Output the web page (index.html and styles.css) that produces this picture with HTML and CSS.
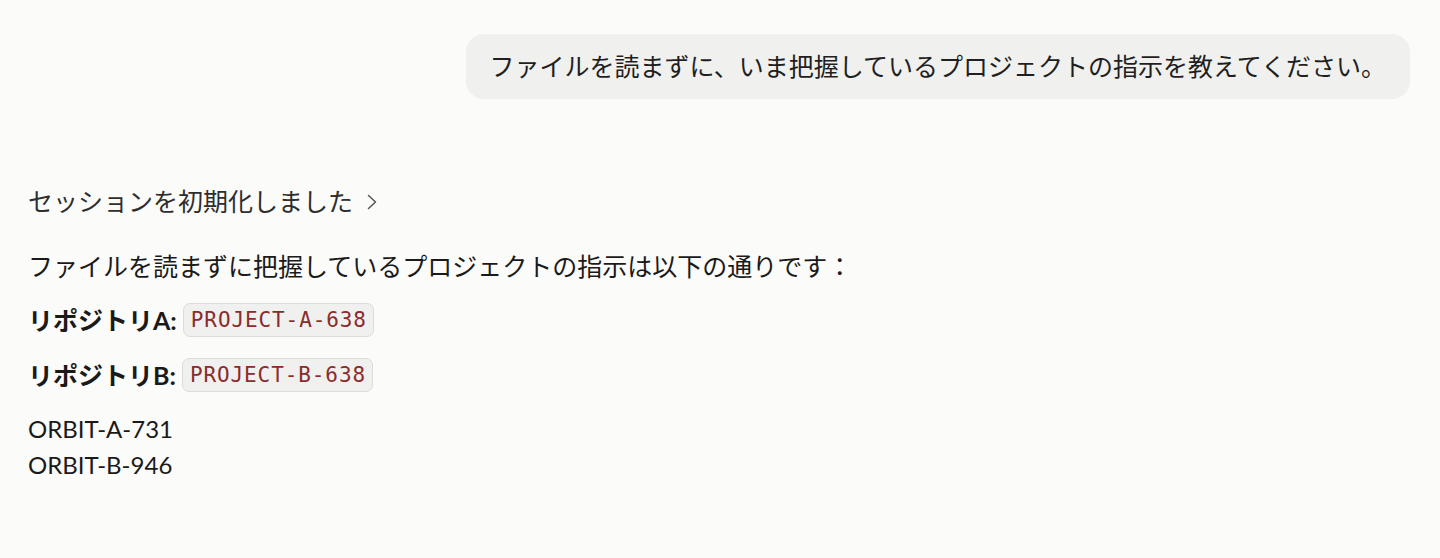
FILE: index.html
```html
<!DOCTYPE html>
<html>
	<head>
		<meta http-equiv="Content-Type" content="text/html; charset=utf-8" />
		<title>Chat</title>
		<link rel="stylesheet" href="styles.css">
	</head>
	<body>
		<div id="chat">
			<div class="user-row">
				<div class="bubble">ファイルを読まずに、いま把握しているプロジェクトの指示を教えてください。</div>
			</div>
			<div class="reply">
				<div class="status">セッションを初期化しました
					<svg class="chevron" width="10" height="16" viewBox="0 0 10 16"><path d="M1.5 1.5l7 6.5-7 6.5" fill="none" stroke="#555" stroke-width="1.5" stroke-linecap="round" stroke-linejoin="round"/></svg>
				</div>
				<p>ファイルを読まずに把握しているプロジェクトの指示は以下の通りです：</p>
				<p class="repo"><b>リポジトリA:</b> <code>PROJECT-A-638</code></p>
				<p class="repo"><b>リポジトリB:</b> <code>PROJECT-B-638</code></p>
				<p class="ids">ORBIT-A-731<br>ORBIT-B-946</p>
			</div>
		</div>
	</body>
</html>
```

FILE: styles.css
```css
body {margin:0;background:#fbfbf9;font-family:Lato, "Noto Sans CJK JP", sans-serif;color:#1a1a1a;}
#chat {padding:34px 30px 0 28px;}
.user-row {display:flex;justify-content:flex-end;}
.bubble {background:#f0f0ee;border-radius:18px;padding:14px 24px 15px 23px;font-size:25px;line-height:36px;color:#1f1f1f;}
.reply {margin-top:84px;font-size:25px;line-height:36px;}
.status {display:flex;align-items:center;gap:14px;color:#2e2e2e;}
.chevron {margin-top:1px;}
.reply p {margin:17px 0 0 0;}
.status + p {margin-top:29px;}
.reply b {font-weight:700;}
.repo {display:flex;align-items:center;gap:6px;height:38px;}
.ids {font-size:24px;}
code {font-family:"DejaVu Sans Mono", monospace;font-size:21px;line-height:26px;color:#8a2c2c;background:#f0f0ee;border:1px solid #dcdcd8;border-radius:7px;padding:3px 6px 3px 7px;letter-spacing:0.9px;}
```
